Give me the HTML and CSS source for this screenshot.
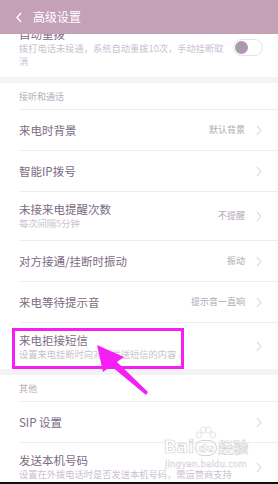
FILE: index.html
```html
<!DOCTYPE html>
<html lang="zh">
<head>
<meta charset="utf-8">
<link rel="stylesheet" href="styles.css">
</head>
<body>
<div class="app">
  <header class="topbar">
    <svg class="back" width="8" height="11" viewBox="0 0 8 11"><polyline points="6,1 2,5.5 6,10" fill="none" stroke="#fff" stroke-width="1.4"/></svg>
    <span class="topbar-title">高级设置</span>
  </header>
  <div class="viewport">
    <div class="list">
      <div class="row row-two first">
        <div class="text wrap">
          <div class="title">自动重拨</div>
          <div class="sub">拨打电话未接通，系统自动重拨10次，手动挂断取消</div>
        </div>
        <div class="toggle"><span class="knob"></span></div>
      </div>
      <div class="band"></div>
      <div class="section">接听和通话</div>
      <div class="row">
        <div class="text"><div class="title">来电时背景</div></div>
        <div class="value">默认背景</div>
        <svg class="chev" width="6" height="11" viewBox="0 0 6 11"><polyline points="1,1 5,5.5 1,10" fill="none" stroke="#cfc7d3" stroke-width="1"/></svg>
      </div>
      <div class="row">
        <div class="text"><div class="title">智能IP拨号</div></div>
        <svg class="chev" width="6" height="11" viewBox="0 0 6 11"><polyline points="1,1 5,5.5 1,10" fill="none" stroke="#cfc7d3" stroke-width="1"/></svg>
      </div>
      <div class="row row-two">
        <div class="text"><div class="title">未接来电提醒次数</div><div class="sub">每次间隔5分钟</div></div>
        <div class="value">不提醒</div>
        <svg class="chev" width="6" height="11" viewBox="0 0 6 11"><polyline points="1,1 5,5.5 1,10" fill="none" stroke="#cfc7d3" stroke-width="1"/></svg>
      </div>
      <div class="row">
        <div class="text"><div class="title">对方接通/挂断时振动</div></div>
        <div class="value">振动</div>
        <svg class="chev" width="6" height="11" viewBox="0 0 6 11"><polyline points="1,1 5,5.5 1,10" fill="none" stroke="#cfc7d3" stroke-width="1"/></svg>
      </div>
      <div class="row">
        <div class="text"><div class="title">来电等待提示音</div></div>
        <div class="value">提示音一直响</div>
        <svg class="chev" width="6" height="11" viewBox="0 0 6 11"><polyline points="1,1 5,5.5 1,10" fill="none" stroke="#cfc7d3" stroke-width="1"/></svg>
      </div>
      <div class="row row-two tight">
        <div class="text"><div class="title">来电拒接短信</div><div class="sub">设置来电挂断时向对方发送短信的内容</div></div>
        <svg class="chev" width="6" height="11" viewBox="0 0 6 11"><polyline points="1,1 5,5.5 1,10" fill="none" stroke="#cfc7d3" stroke-width="1"/></svg>
      </div>
      <div class="band"></div>
      <div class="section">其他</div>
      <div class="row">
        <div class="text"><div class="title">SIP 设置</div></div>
        <svg class="chev" width="6" height="11" viewBox="0 0 6 11"><polyline points="1,1 5,5.5 1,10" fill="none" stroke="#cfc7d3" stroke-width="1"/></svg>
      </div>
      <div class="row row-two">
        <div class="text"><div class="title">发送本机号码</div><div class="sub">设置在外拨电话时是否发送本机号码，需运营商支持</div></div>
        <svg class="chev" width="6" height="11" viewBox="0 0 6 11"><polyline points="1,1 5,5.5 1,10" fill="none" stroke="#cfc7d3" stroke-width="1"/></svg>
      </div>
    </div>
  </div>
  <div class="bottom-edge"></div>

  <div class="highlight"></div>
  <svg class="arrow" width="278" height="484" viewBox="0 0 278 484">
    <polygon points="97,345 124,357 117,362 148,392 146,395 111,366 103,372" fill="#f51ef5"/>
  </svg>
  <div class="watermark">
    <div class="wm-logo">
      <span class="wm-bai">Bai</span>
      <span class="wm-du">
        <svg class="wm-paw" width="22" height="14" viewBox="0 0 22 14">
          <ellipse cx="4" cy="9" rx="2.6" ry="3.2" fill="#fff" stroke="#d6d6d6" stroke-width="0.7"/>
          <ellipse cx="8.5" cy="4" rx="2.6" ry="3.2" fill="#fff" stroke="#d6d6d6" stroke-width="0.7"/>
          <ellipse cx="13.5" cy="4" rx="2.6" ry="3.2" fill="#fff" stroke="#d6d6d6" stroke-width="0.7"/>
          <ellipse cx="18" cy="9" rx="2.6" ry="3.2" fill="#fff" stroke="#d6d6d6" stroke-width="0.7"/>
        </svg>
        <span class="wm-du-text">du</span>
      </span>
      <span class="wm-jy">经验</span>
    </div>
    <div class="wm-url">jingyan.baidu.com</div>
  </div>
</div>
</body>
</html>
```

FILE: styles.css
```css
* { box-sizing: border-box; }
html, body { margin: 0; padding: 0; background: #fff; }
body { font-family: "Noto Sans CJK SC", "Noto Sans", sans-serif; }

.app {
  position: relative;
  width: 278px;
  height: 484px;
  overflow: hidden;
  display: flex;
  flex-direction: column;
  background: #fff;
}

.topbar {
  flex: 0 0 34px;
  height: 34px;
  background: #c5a1b8;
  display: flex;
  align-items: center;
  padding-left: 15px;
  gap: 10px;
  position: relative;
  z-index: 2;
}
.back { display: block; }
.topbar-title {
  color: #fff;
  font-size: 12px;
  line-height: 16px;
}

.viewport {
  flex: 1 1 auto;
  overflow: hidden;
}
.list {
  margin-top: -18px;
}

.row {
  margin-left: 19px;
  padding-right: 16px;
  border-top: 1px solid #eeecef;
  height: 41px;
  display: flex;
  align-items: center;
}
.row.first { border-top: none; height: auto; padding-top: 11px; padding-bottom: 9px; padding-right: 15px; }
.row-two { height: auto; padding-top: 10px; padding-bottom: 10px; }
.row-two.tight { padding-bottom: 9px; }
.row-two.tight .sub { line-height: 12px; }

.text { flex: 1 1 auto; min-width: 0; }
.text.wrap { flex: 0 0 205px; width: 205px; }

.title {
  font-size: 11.5px;
  line-height: 15px;
  color: #7b6b82;
  white-space: nowrap;
}
.sub {
  font-size: 9.25px;
  line-height: 13px;
  color: #cbc1cf;
  white-space: nowrap;
}
.text.wrap .sub { white-space: normal; }

.value {
  font-size: 9px;
  line-height: 12px;
  color: #b1a6b6;
  margin-right: 11px;
  white-space: nowrap;
}
.chev { display: block; flex: 0 0 auto; }

.toggle {
  margin-left: auto;
  width: 30px;
  height: 17px;
  border: 1px solid #e7e2e9;
  border-radius: 9px;
  background: #fff;
  display: flex;
  align-items: center;
  padding-left: 1px;
}
.knob {
  width: 13px;
  height: 13px;
  border-radius: 50%;
  background: #a99bac;
}

.band {
  height: 6px;
  background: #f4f2f5;
}
.section {
  height: 26px;
  padding-left: 19px;
  display: flex;
  align-items: center;
  font-size: 9px;
  color: #b7acbb;
}

.bottom-edge {
  position: absolute;
  left: 0;
  right: 0;
  bottom: 0;
  height: 2px;
  background: #111;
  z-index: 3;
}

.highlight {
  position: absolute;
  left: 12px;
  top: 328px;
  width: 172px;
  height: 41px;
  border: 3px solid #f51ef5;
  z-index: 3;
}
.arrow {
  position: absolute;
  left: 0;
  top: 0;
  z-index: 4;
  pointer-events: none;
}

.watermark {
  position: absolute;
  left: 160px;
  top: 426px;
  width: 92px;
  z-index: 3;
  display: flex;
  flex-direction: column;
  align-items: center;
}
.wm-logo {
  display: flex;
  align-items: flex-end;
  gap: 1px;
}
.wm-bai, .wm-jy {
  font-family: "DejaVu Sans", sans-serif;
  font-size: 17px;
  line-height: 18px;
  font-weight: bold;
  color: #fff;
  -webkit-text-stroke: 0.7px #d2d2d2;
}
.wm-jy { font-family: "Noto Sans CJK SC", sans-serif; font-size: 15px; }
.wm-du {
  display: flex;
  flex-direction: column;
  align-items: center;
}
.wm-paw { display: block; }
.wm-du-text {
  font-family: "DejaVu Sans", sans-serif;
  font-size: 11px;
  line-height: 15px;
  width: 22px;
  height: 16px;
  border-radius: 8px;
  border: 0.8px solid #d2d2d2;
  text-align: center;
  color: #fff;
  font-weight: bold;
  -webkit-text-stroke: 0.6px #d2d2d2;
}
.wm-url {
  font-family: "DejaVu Sans", sans-serif;
  font-size: 8.5px;
  line-height: 10px;
  color: #fff;
  -webkit-text-stroke: 0.5px #d6d6d6;
  margin-top: 3px;
  letter-spacing: 0.2px;
}
```
